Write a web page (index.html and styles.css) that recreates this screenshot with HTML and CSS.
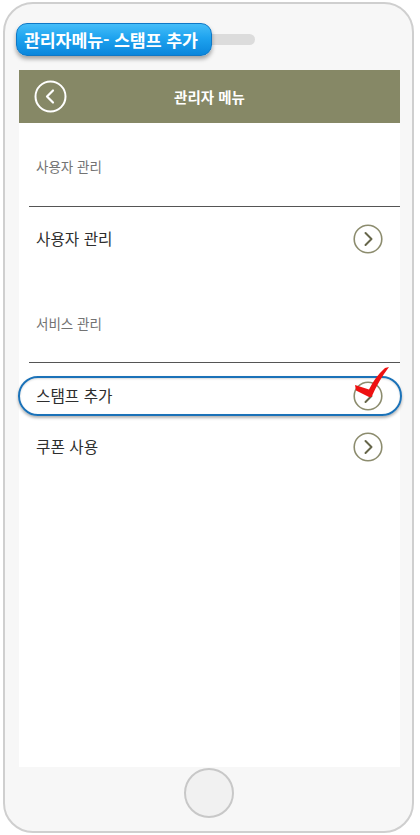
FILE: index.html
```html
<!DOCTYPE html>
<html lang="ko">
<head>
<meta charset="utf-8">
<link rel="stylesheet" href="styles.css">
</head>
<body>
<div class="phone">
  <div class="badge-track"></div>
  <div class="badge">관리자메뉴- 스탬프 추가</div>
  <div class="screen">
    <div class="header">
      <span class="back">
        <svg width="33" height="33" viewBox="0 0 33 33"><circle cx="16.5" cy="16.5" r="15" fill="none" stroke="#fff" stroke-width="2"/><path d="M19 10.5 L13 16.5 L19 22.5" fill="none" stroke="#fff" stroke-width="2.2" stroke-linecap="round" stroke-linejoin="round"/></svg>
      </span>
      <span class="header-title">관리자 메뉴</span>
    </div>
    <div class="section-head first"><span class="section-label">사용자 관리</span></div>
    <div class="list first-list">
      <div class="row"><span class="row-text">사용자 관리</span><span class="chev"><svg width="30" height="30" viewBox="0 0 30 30"><circle cx="15" cy="15" r="13.8" fill="none" stroke="#8c8c6e" stroke-width="1.6"/><path d="M12.5 9 L18.5 15 L12.5 21" fill="none" stroke="#66664a" stroke-width="2" stroke-linecap="round" stroke-linejoin="round"/></svg></span></div>
    </div>
    <div class="section-head second"><span class="section-label">서비스 관리</span></div>
    <div class="list second-list">
      <div class="row active"><span class="row-text">스탬프 추가</span><span class="chev"><svg width="30" height="30" viewBox="0 0 30 30"><circle cx="15" cy="15" r="13.8" fill="none" stroke="#8c8c6e" stroke-width="1.6"/><path d="M12.5 9 L18.5 15 L12.5 21" fill="none" stroke="#66664a" stroke-width="2" stroke-linecap="round" stroke-linejoin="round"/></svg></span>
        <span class="ring"></span>
        <svg class="check" width="40" height="32" viewBox="0 0 40 32"><path d="M0 18 L14 22.5 Q20 10 30 1 L34 0 Q24 13 16.5 30 L14 30 L1 23.5 Z" fill="#ee1111"/></svg>
      </div>
      <div class="row"><span class="row-text">쿠폰 사용</span><span class="chev"><svg width="30" height="30" viewBox="0 0 30 30"><circle cx="15" cy="15" r="13.8" fill="none" stroke="#8c8c6e" stroke-width="1.6"/><path d="M12.5 9 L18.5 15 L12.5 21" fill="none" stroke="#66664a" stroke-width="2" stroke-linecap="round" stroke-linejoin="round"/></svg></span></div>
    </div>
  </div>
  <div class="home-area"><span class="home"></span></div>
</div>
</body>
</html>
```
FILE: styles.css
```css
* { box-sizing: border-box; }
html, body { margin: 0; padding: 0; background: #ffffff; }
body {
  width: 420px;
  height: 835px;
  overflow: hidden;
  font-family: "Noto Sans CJK KR", "Noto Sans", sans-serif;
}
.phone {
  position: relative;
  margin: 2px 0 0 3px;
  width: 411px;
  height: 831px;
  border: 2px solid #cfcfcf;
  border-radius: 30px;
  background: #f7f7f7;
  padding: 66px 12px 0 14px;
  display: flex;
  flex-direction: column;
}
.badge-track {
  position: absolute;
  left: 170px;
  top: 30px;
  width: 80px;
  height: 11px;
  border-radius: 6px;
  background: #dcdcdc;
}
.badge {
  position: absolute;
  left: 11px;
  top: 19px;
  width: 196px;
  height: 33px;
  border-radius: 11px;
  background: linear-gradient(#45bdf8 0%, #1ea3ef 45%, #0a86dc 100%);
  border: 1px solid #0f78c6;
  box-shadow: 0 3px 4px rgba(0,0,0,0.35);
  color: #fff;
  font-weight: 700;
  font-size: 17.3px;
  line-height: 31px;
  padding-left: 7px;
  white-space: nowrap;
  letter-spacing: -0.1px;
}
.screen {
  height: 697px;
  background: #ffffff;
  display: flex;
  flex-direction: column;
}
.header {
  height: 53px;
  background: #868866;
  display: flex;
  align-items: center;
  position: relative;
  padding-left: 15px;
}
.back { display: flex; }
.header-title {
  position: absolute;
  left: 0;
  right: 0;
  text-align: center;
  color: #fff;
  font-weight: 700;
  font-size: 14.5px;
  pointer-events: none;
}
.section-head {
  margin-left: 10px;
  padding-left: 7px;
  border-bottom: 1.5px solid #555;
  display: flex;
  flex-direction: column;
}
.section-head.first { height: 84px; padding-top: 32px; }
.section-head.second { height: 99px; padding-top: 48px; }
.section-label {
  font-size: 13.5px;
  line-height: 22px;
  color: #737373;
}
.list.first-list { padding-top: 6px; }
.list.second-list { padding-top: 7px; }
.row {
  position: relative;
  height: 51px;
  display: flex;
  align-items: center;
  justify-content: space-between;
  padding: 0 17px 0 17px;
}
.row-text {
  font-size: 15.7px;
  font-weight: 400;
  color: #2e2e2e;
}
.chev { display: flex; }
.ring {
  position: absolute;
  left: -1px;
  right: -2px;
  top: 6px;
  bottom: 5px;
  border: 2px solid #1b72b8;
  border-radius: 20px;
  box-shadow: 0 2px 3px rgba(0,0,0,0.3), inset 0 1px 2px rgba(0,0,0,0.15);
}
.check {
  position: absolute;
  left: 336px;
  top: -3px;
}
.home-area {
  flex: 1;
  display: flex;
  justify-content: center;
  padding-top: 1px;
  padding-right: 2px;
}
.home {
  width: 50px;
  height: 50px;
  border-radius: 50%;
  border: 2px solid #c8c8c8;
  background: #f1f1f1;
}
```
